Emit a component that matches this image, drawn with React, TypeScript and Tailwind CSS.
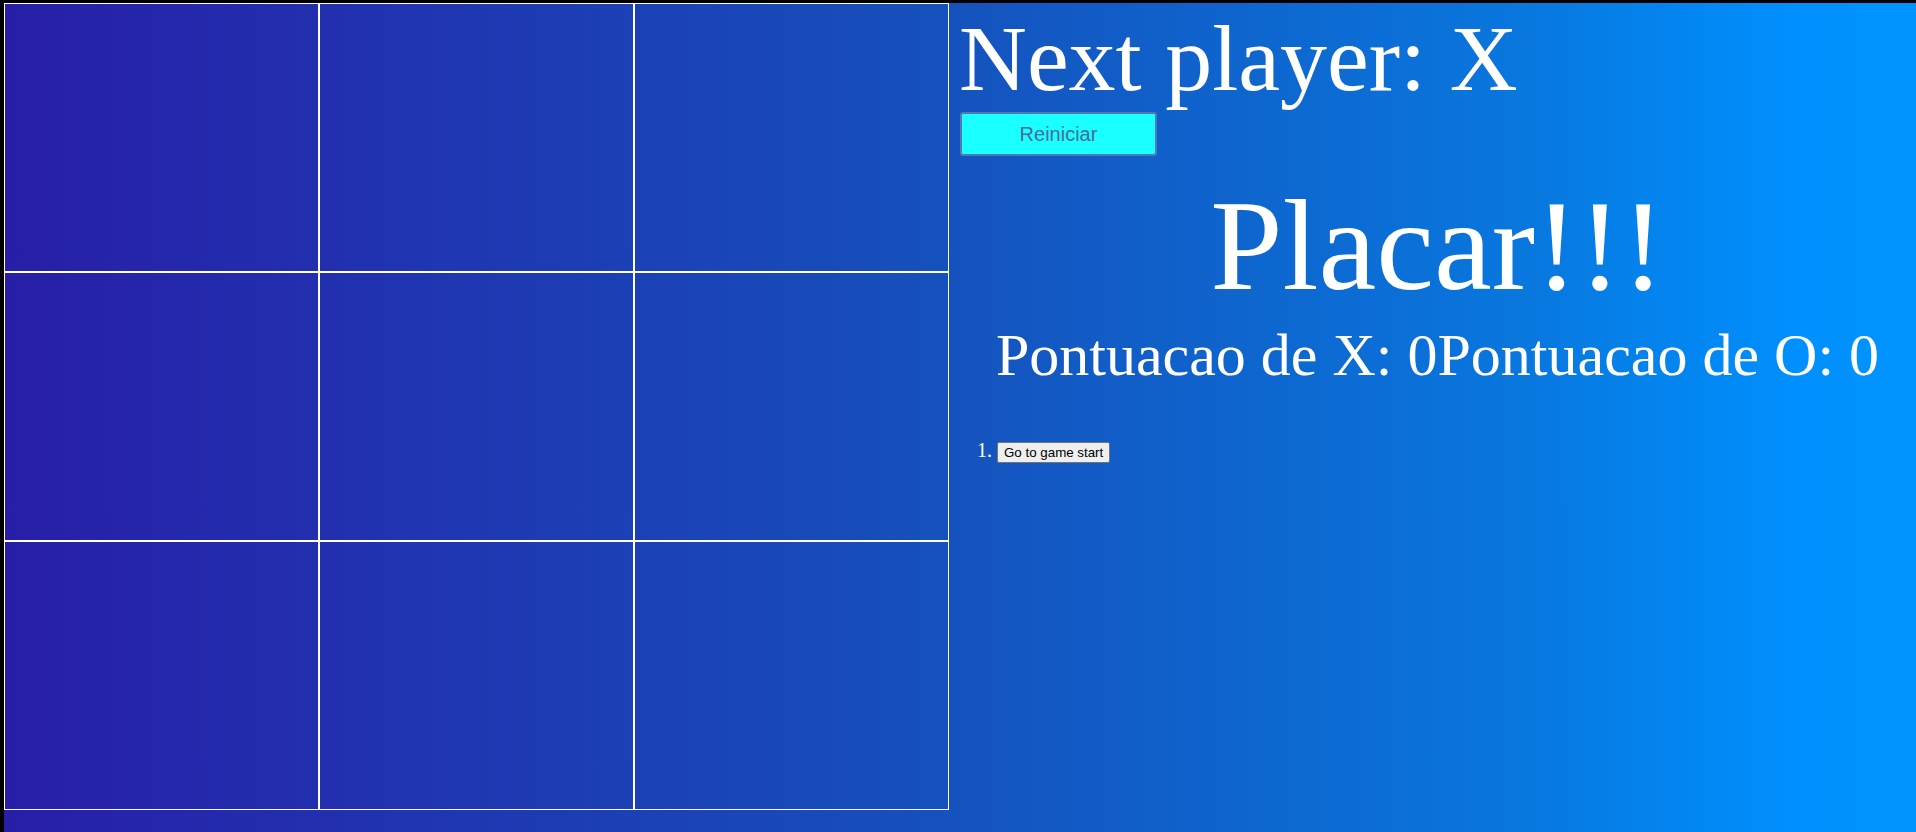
import React from "react";

const serif = { fontFamily: '"Liberation Serif", "Times New Roman", serif' };

export default function App() {
  const cells = Array.from({ length: 9 });
  return (
    <div className="h-[832px] w-[1916px] bg-black pt-[3px] pl-[4px] overflow-hidden">
      <div className="flex h-full w-full bg-[linear-gradient(to_right,rgb(40,30,168)_0%,rgb(22,80,188)_48%,rgb(8,120,223)_80%,rgb(0,144,255)_94%,rgb(0,148,255)_100%)]">
        <div className="grid grid-cols-[315px_315px_315px] self-start">
          {cells.map((_, i) => (
            <button key={i} className="h-[269px] w-[315px] border border-white bg-transparent" />
          ))}
        </div>
        <div className="flex flex-1 flex-col pl-[10px] text-white" style={serif}>
          <div className="mt-[2px] text-[94px] leading-[106px]">Next player: X</div>
          <button
            className="ml-[1px] mt-[1px] h-[44px] w-[197px] rounded-[3px] border-2 border-[#4f7bb0] bg-[#1affff] text-[20px] text-[#4c6b98]"
            style={{ fontFamily: '"Liberation Sans", Arial, sans-serif' }}
          >
            Reiniciar
          </button>
          <div className="mt-[17px] text-center text-[130px] leading-[145px]">Placar!!!</div>
          <div className="mt-[4px] text-center text-[60px] leading-[66px]">
            <span>Pontuacao de X: 0</span>
            <span>Pontuacao de O: 0</span>
          </div>
          <ol className="mt-[47px] list-decimal pl-[38px] text-[20px]">
            <li>
              <button
                className="rounded-[2px] border border-[#767676] bg-[#efefef] px-[6px] py-[2px] text-[13.33px] leading-[normal] text-black"
                style={{ fontFamily: '"Liberation Sans", Arial, sans-serif' }}
              >
                Go to game start
              </button>
            </li>
          </ol>
        </div>
      </div>
    </div>
  );
}
